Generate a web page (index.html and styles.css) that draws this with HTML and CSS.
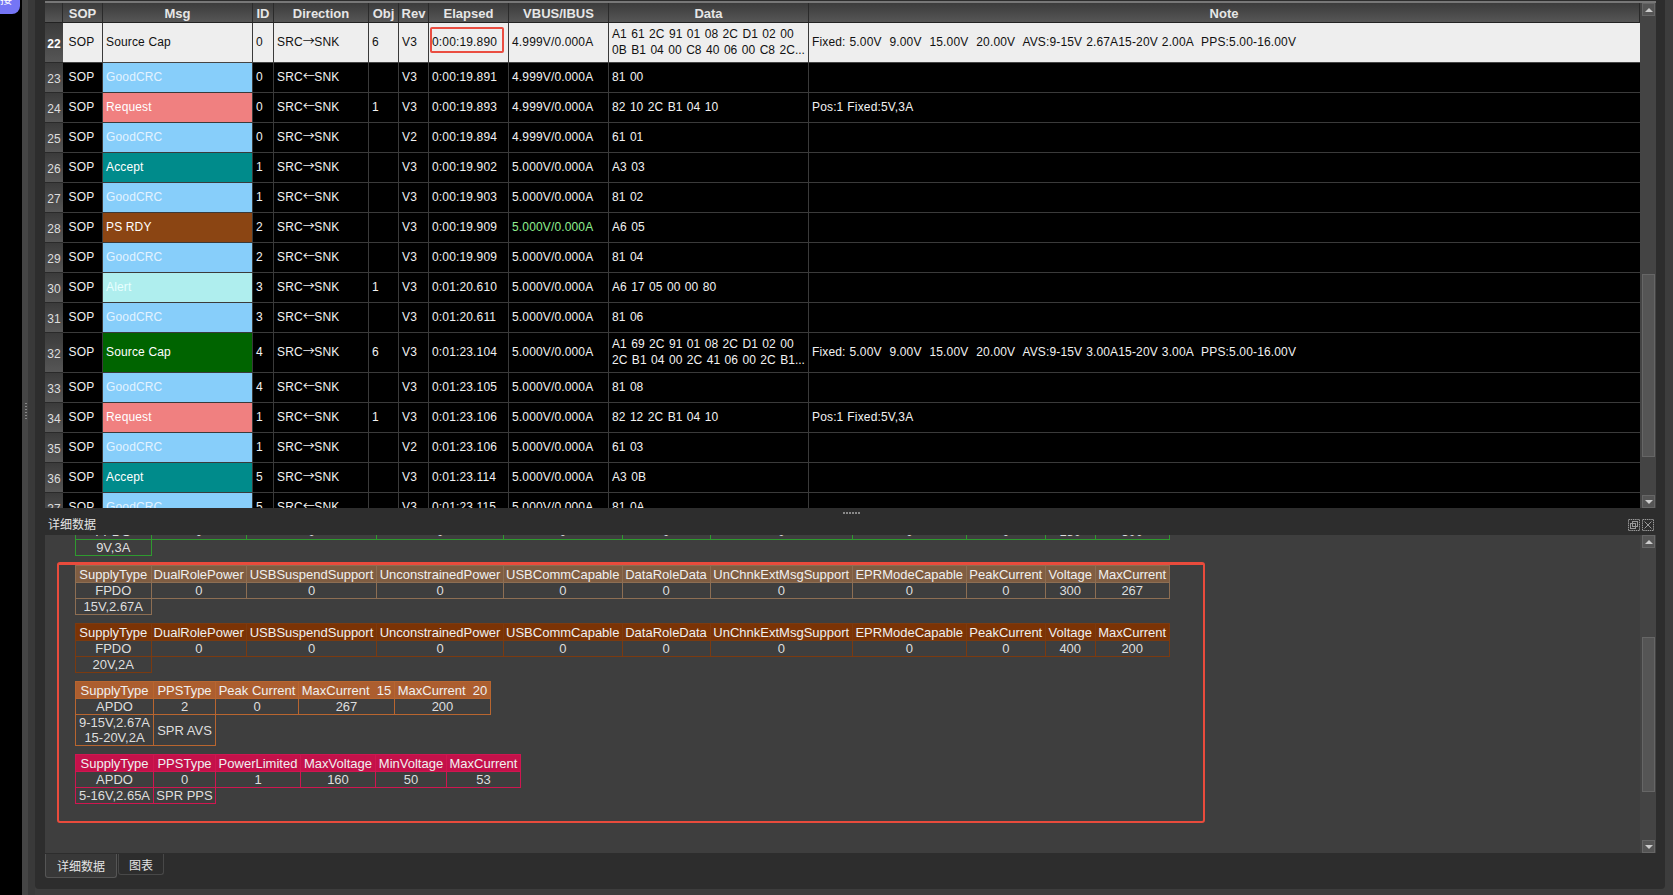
FILE: index.html
```html
<!DOCTYPE html>
<html lang="zh">
<head>
  <meta charset="UTF-8">
  <title>PD Analyzer</title>
  <link rel="stylesheet" href="styles.css">
</head>
<body>

  <aside class="rail">
    <div class="pill"><span>接</span></div>
  </aside>

  <div class="gutter">
    <div class="grip-v"></div>
  </div>

  <main class="panel">
    <div class="topline"></div>

    <section class="log">
      <div class="log-view">
        <table class="log-table">
          <thead>
            <tr>
              <th class="c-num"></th>
              <th class="c-sop">SOP</th>
              <th class="c-msg">Msg</th>
              <th class="c-id">ID</th>
              <th class="c-dir">Direction</th>
              <th class="c-obj">Obj</th>
              <th class="c-rev">Rev</th>
              <th class="c-time">Elapsed</th>
              <th class="c-vbus">VBUS/IBUS</th>
              <th class="c-data">Data</th>
              <th class="c-note">Note</th>
            </tr>
          </thead>
          <tbody>
            <tr class="tall selected">
              <th>22</th><td class="sop">SOP</td><td>Source Cap</td><td>0</td><td>SRC<span class="arrow">→</span>SNK</td><td>6</td><td>V3</td>
              <td class="marked">0:00:19.890<span class="mark"></span></td>
              <td>4.999V/0.000A</td>
              <td class="bytes">A1 61 2C 91 01 08 2C D1 02 00<br>0B B1 04 00 C8 40 06 00 C8 2C...</td>
              <td class="note">Fixed: 5.00V  9.00V  15.00V  20.00V  AVS:9-15V 2.67A15-20V 2.00A  PPS:5.00-16.00V</td>
            </tr>
            <tr>
              <th>23</th><td class="sop">SOP</td><td class="good">GoodCRC</td><td>0</td><td>SRC<span class="arrow">←</span>SNK</td><td></td><td>V3</td><td>0:00:19.891</td><td>4.999V/0.000A</td><td class="bytes">81 00</td><td></td>
            </tr>
            <tr>
              <th>24</th><td class="sop">SOP</td><td class="request">Request</td><td>0</td><td>SRC<span class="arrow">←</span>SNK</td><td>1</td><td>V3</td><td>0:00:19.893</td><td>4.999V/0.000A</td><td class="bytes">82 10 2C B1 04 10</td><td class="note">Pos:1 Fixed:5V,3A</td>
            </tr>
            <tr>
              <th>25</th><td class="sop">SOP</td><td class="good">GoodCRC</td><td>0</td><td>SRC<span class="arrow">→</span>SNK</td><td></td><td>V2</td><td>0:00:19.894</td><td>4.999V/0.000A</td><td class="bytes">61 01</td><td></td>
            </tr>
            <tr>
              <th>26</th><td class="sop">SOP</td><td class="accept">Accept</td><td>1</td><td>SRC<span class="arrow">→</span>SNK</td><td></td><td>V3</td><td>0:00:19.902</td><td>5.000V/0.000A</td><td class="bytes">A3 03</td><td></td>
            </tr>
            <tr>
              <th>27</th><td class="sop">SOP</td><td class="good">GoodCRC</td><td>1</td><td>SRC<span class="arrow">←</span>SNK</td><td></td><td>V3</td><td>0:00:19.903</td><td>5.000V/0.000A</td><td class="bytes">81 02</td><td></td>
            </tr>
            <tr>
              <th>28</th><td class="sop">SOP</td><td class="psrdy">PS RDY</td><td>2</td><td>SRC<span class="arrow">→</span>SNK</td><td></td><td>V3</td><td>0:00:19.909</td><td class="ok">5.000V/0.000A</td><td class="bytes">A6 05</td><td></td>
            </tr>
            <tr>
              <th>29</th><td class="sop">SOP</td><td class="good">GoodCRC</td><td>2</td><td>SRC<span class="arrow">←</span>SNK</td><td></td><td>V3</td><td>0:00:19.909</td><td>5.000V/0.000A</td><td class="bytes">81 04</td><td></td>
            </tr>
            <tr>
              <th>30</th><td class="sop">SOP</td><td class="alert">Alert</td><td>3</td><td>SRC<span class="arrow">→</span>SNK</td><td>1</td><td>V3</td><td>0:01:20.610</td><td>5.000V/0.000A</td><td class="bytes">A6 17 05 00 00 80</td><td></td>
            </tr>
            <tr>
              <th>31</th><td class="sop">SOP</td><td class="good">GoodCRC</td><td>3</td><td>SRC<span class="arrow">←</span>SNK</td><td></td><td>V3</td><td>0:01:20.611</td><td>5.000V/0.000A</td><td class="bytes">81 06</td><td></td>
            </tr>
            <tr class="tall">
              <th>32</th><td class="sop">SOP</td><td class="source">Source Cap</td><td>4</td><td>SRC<span class="arrow">→</span>SNK</td><td>6</td><td>V3</td><td>0:01:23.104</td><td>5.000V/0.000A</td>
              <td class="bytes">A1 69 2C 91 01 08 2C D1 02 00<br>2C B1 04 00 2C 41 06 00 2C B1...</td>
              <td class="note">Fixed: 5.00V  9.00V  15.00V  20.00V  AVS:9-15V 3.00A15-20V 3.00A  PPS:5.00-16.00V</td>
            </tr>
            <tr>
              <th>33</th><td class="sop">SOP</td><td class="good">GoodCRC</td><td>4</td><td>SRC<span class="arrow">←</span>SNK</td><td></td><td>V3</td><td>0:01:23.105</td><td>5.000V/0.000A</td><td class="bytes">81 08</td><td></td>
            </tr>
            <tr>
              <th>34</th><td class="sop">SOP</td><td class="request">Request</td><td>1</td><td>SRC<span class="arrow">←</span>SNK</td><td>1</td><td>V3</td><td>0:01:23.106</td><td>5.000V/0.000A</td><td class="bytes">82 12 2C B1 04 10</td><td class="note">Pos:1 Fixed:5V,3A</td>
            </tr>
            <tr>
              <th>35</th><td class="sop">SOP</td><td class="good">GoodCRC</td><td>1</td><td>SRC<span class="arrow">→</span>SNK</td><td></td><td>V2</td><td>0:01:23.106</td><td>5.000V/0.000A</td><td class="bytes">61 03</td><td></td>
            </tr>
            <tr>
              <th>36</th><td class="sop">SOP</td><td class="accept">Accept</td><td>5</td><td>SRC<span class="arrow">→</span>SNK</td><td></td><td>V3</td><td>0:01:23.114</td><td>5.000V/0.000A</td><td class="bytes">A3 0B</td><td></td>
            </tr>
            <tr>
              <th>37</th><td class="sop">SOP</td><td class="good">GoodCRC</td><td>5</td><td>SRC<span class="arrow">←</span>SNK</td><td></td><td>V3</td><td>0:01:23.115</td><td>5.000V/0.000A</td><td class="bytes">81 0A</td><td></td>
            </tr>
          </tbody>
        </table>
      </div>
      <div class="scrollbar">
        <div class="sb-btn up"></div>
        <div class="sb-track log-track"><div class="sb-thumb"></div></div>
        <div class="sb-btn down"></div>
      </div>
    </section>

    <div class="splitter"><div class="grip-h"></div></div>

    <div class="titlebar">
      <span class="title">详细数据</span>
      <div class="title-icons">
        <svg width="12" height="12" viewBox="0 0 12 12" fill="none" stroke="#999">
          <rect x=".5" y=".5" width="11" height="11" stroke-dasharray="1.5 .7"/>
          <rect x="4.5" y="2.5" width="5" height="5"/>
          <rect x="2.5" y="4.5" width="5" height="5"/>
        </svg>
        <svg width="12" height="12" viewBox="0 0 12 12" fill="none" stroke="#999">
          <rect x=".5" y=".5" width="11" height="11" stroke-dasharray="1.5 .7"/>
          <path d="M2.5 2.5l7 7M9.5 2.5l-7 7"/>
        </svg>
      </div>
    </div>

    <section class="detail">
      <div class="detail-view">
        <div class="detail-content">
          <table class="pdo green">
            <tr>
              <td class="w-type">FPDO</td><td class="w-a">0</td><td class="w-b">0</td><td class="w-c">0</td><td class="w-d">0</td><td class="w-e">0</td><td class="w-f">0</td><td class="w-g">0</td><td class="w-h">0</td><td class="w-i">180</td><td class="w-j">300</td>
            </tr>
            <tr><td>9V,3A</td></tr>
          </table>

          <div class="callout">
            <table class="pdo tan">
              <tr>
                <th class="w-type">SupplyType</th><th class="w-a">DualRolePower</th><th class="w-b">USBSuspendSupport</th><th class="w-c">UnconstrainedPower</th><th class="w-d">USBCommCapable</th><th class="w-e">DataRoleData</th><th class="w-f">UnChnkExtMsgSupport</th><th class="w-g">EPRModeCapable</th><th class="w-h">PeakCurrent</th><th class="w-i">Voltage</th><th class="w-j">MaxCurrent</th>
              </tr>
              <tr>
                <td>FPDO</td><td>0</td><td>0</td><td>0</td><td>0</td><td>0</td><td>0</td><td>0</td><td>0</td><td>300</td><td>267</td>
              </tr>
              <tr><td>15V,2.67A</td></tr>
            </table>

            <table class="pdo rust">
              <tr>
                <th class="w-type">SupplyType</th><th class="w-a">DualRolePower</th><th class="w-b">USBSuspendSupport</th><th class="w-c">UnconstrainedPower</th><th class="w-d">USBCommCapable</th><th class="w-e">DataRoleData</th><th class="w-f">UnChnkExtMsgSupport</th><th class="w-g">EPRModeCapable</th><th class="w-h">PeakCurrent</th><th class="w-i">Voltage</th><th class="w-j">MaxCurrent</th>
              </tr>
              <tr>
                <td>FPDO</td><td>0</td><td>0</td><td>0</td><td>0</td><td>0</td><td>0</td><td>0</td><td>0</td><td>400</td><td>200</td>
              </tr>
              <tr><td>20V,2A</td></tr>
            </table>

            <table class="pdo copper">
              <tr>
                <th class="w-apdo">SupplyType</th><th class="w-pps">PPSType</th><th class="w-peak">Peak Current</th><th class="w-m15">MaxCurrent&nbsp; 15</th><th class="w-m20">MaxCurrent&nbsp; 20</th>
              </tr>
              <tr>
                <td>APDO</td><td>2</td><td>0</td><td>267</td><td>200</td>
              </tr>
              <tr><td>9-15V,2.67A<br>15-20V,2A</td><td>SPR AVS</td></tr>
            </table>

            <table class="pdo pink">
              <tr>
                <th class="w-apdo">SupplyType</th><th class="w-pps">PPSType</th><th class="w-limit">PowerLimited</th><th class="w-maxv">MaxVoltage</th><th class="w-minv">MinVoltage</th><th class="w-maxc">MaxCurrent</th>
              </tr>
              <tr>
                <td>APDO</td><td>0</td><td>1</td><td>160</td><td>50</td><td>53</td>
              </tr>
              <tr><td>5-16V,2.65A</td><td>SPR PPS</td></tr>
            </table>
          </div>
        </div>
      </div>
      <div class="scrollbar">
        <div class="sb-btn up"></div>
        <div class="sb-track detail-track"><div class="sb-thumb"></div></div>
        <div class="sb-btn down"></div>
      </div>
    </section>

    <nav class="tabs">
      <div class="tab active">详细数据</div>
      <div class="tab">图表</div>
    </nav>
  </main>

</body>
</html>
```

FILE: styles.css
```css
* {
  box-sizing: border-box;
  margin: 0;
  padding: 0;
}

html, body {
  height: 100%;
}

body {
  display: flex;
  height: 895px;
  overflow: hidden;
  background-color: #3d3d3d;
  color: #eee;
  font-family: "Liberation Sans", "Noto Sans CJK SC", sans-serif;
  font-size: 12px;
}

/* Left edge */
.rail {
  width: 22px;
  background-color: #000;
  flex: none;
}

.pill {
  width: 20px;
  height: 14px;
  background-color: #7575f5;
  border-radius: 0 0 8px 0;
  overflow: hidden;
  color: #fff;
  font-size: 12px;
  line-height: 12px;
}

.pill span {
  display: block;
  margin-top: -6px;
}

.gutter {
  width: 13px;
  flex: none;
  background: linear-gradient(to right, #454545 0, #454545 6px, #393939 6px);
}

.grip-v {
  width: 2px;
  height: 17px;
  margin: 403px 0 0 3px;
  background: repeating-linear-gradient(to bottom, #888 0, #888 1px, transparent 1px, transparent 3px);
}

/* Main panel */
.panel {
  width: 1630px;
  height: 889px;
  flex: none;
  display: flex;
  flex-direction: column;
  background-color: #2d2d2d;
  border-radius: 0 0 4px 4px;
  padding: 1px 9px 0 10px;
}

.topline {
  height: 2px;
  background-color: #777;
  flex: none;
}

.log {
  height: 505px;
  flex: none;
  display: flex;
}

.log-view {
  width: 1595px;
  overflow: hidden;
  background-color: #000;
}

.log-table {
  width: 1595px;
  table-layout: fixed;
  border-collapse: separate;
  border-spacing: 0;
}

.log-table thead th {
  height: 20px;
  padding-top: 2px;
  font-size: 13px;
  font-weight: bold;
  color: #e6e6e6;
  text-align: center;
  background: linear-gradient(to bottom, #3b3b3b, #565656);
  border-right: 1px solid #2a2a2a;
  border-bottom: 1px solid #222;
}

.c-num { width: 18px; }
.c-sop { width: 40px; }
.c-msg { width: 150px; }
.c-id { width: 21px; }
.c-dir { width: 95px; }
.c-obj { width: 30px; }
.c-rev { width: 30px; }
.c-time { width: 80px; }
.c-vbus { width: 100px; }
.c-data { width: 200px; }
.c-note { width: 831px; }

.log-table tbody th {
  height: 30px;
  padding-top: 2px;
  font-size: 12px;
  font-weight: normal;
  color: #ddd;
  text-align: center;
  background: linear-gradient(to bottom, #3b3b3b, #565656);
  border-bottom: 1px solid #2a2a2a;
}

.log-table td {
  height: 30px;
  padding: 0 0 2px 3px;
  color: #f2f2f2;
  letter-spacing: .15px;
  white-space: nowrap;
  overflow: hidden;
  border-right: 1px solid #3a3a3a;
  border-bottom: 1px solid #3a3a3a;
}

.log-table td:last-child {
  border-right: 0;
}

.log-table td.sop {
  text-align: center;
  padding: 0 2px 2px 0;
}

.log-table tr.tall td,
.log-table tr.tall th {
  height: 40px;
}

.log-table tr.selected td {
  background-color: #eee;
  color: #111;
  border-bottom-color: #444;
}

.log-table tr.selected th {
  font-weight: bold;
  color: #fff;
}

.log-table td.good { background-color: #87cefa; color: #e3f3ff; }
.log-table td.request { background-color: #f08080; color: #fff; }
.log-table td.accept { background-color: #008b8b; color: #fff; }
.log-table td.psrdy { background-color: #8b4513; color: #fff; }
.log-table td.alert { background-color: #afeeee; color: #e8ffff; }
.log-table td.source { background-color: #006400; color: #fff; }
.log-table td.ok { color: #90ee90; }

.arrow {
  font-family: "Noto Sans CJK SC", sans-serif;
  line-height: 1;
  letter-spacing: -.5px;
}

.log-table td.bytes {
  letter-spacing: 0;
  word-spacing: 1.2px;
  line-height: 16px;
}

.log-table td.note {
  white-space: pre;
  word-spacing: .45px;
}

.marked {
  position: relative;
}

.mark {
  position: absolute;
  left: 1px;
  top: 4px;
  width: 74px;
  height: 26px;
  border: 2px solid #ea4d41;
  border-radius: 2px;
}

/* Scrollbars */
.scrollbar {
  width: 16px;
  flex: none;
  display: flex;
  flex-direction: column;
  background-color: #444;
  padding: 0 1px 0 2px;
}

.sb-btn {
  height: 13px;
  flex: none;
  display: flex;
  align-items: center;
  justify-content: center;
  background-color: #555;
  border: 1px solid #666;
}

.sb-btn.up::before,
.sb-btn.down::before {
  content: "";
  border-left: 4px solid transparent;
  border-right: 4px solid transparent;
}

.sb-btn.up::before { border-bottom: 4px solid #ccc; }
.sb-btn.down::before { border-top: 4px solid #ccc; }

.sb-track {
  flex: 1;
}

.log-track {
  padding-top: 258px;
}

.detail-track {
  padding-top: 89px;
}

.sb-thumb {
  height: 155px;
  background-color: #555;
  border: 1px solid #666;
}

.log-track .sb-thumb {
  height: 183px;
}

/* Splitter and title */
.splitter {
  height: 8px;
  flex: none;
  padding-top: 4px;
}

.grip-h {
  width: 17px;
  height: 2px;
  margin-left: 798px;
  background: repeating-linear-gradient(to right, #888 0, #888 2px, transparent 2px, transparent 3px);
}

.titlebar {
  height: 19px;
  flex: none;
  display: flex;
  align-items: center;
  justify-content: space-between;
  padding: 0 2px 2px 3px;
}

.title {
  color: #e4e4e4;
  font-size: 12px;
  line-height: 14px;
}

.title-icons {
  display: flex;
  gap: 2px;
}

/* Detail area */
.detail {
  height: 318px;
  flex: none;
  display: flex;
}

.detail-view {
  width: 1595px;
  overflow: hidden;
  background-color: #3e3e3e;
}

.detail-content {
  margin-top: -12px;
}

.pdo {
  border-collapse: collapse;
  table-layout: fixed;
  color: #dedede;
  font-size: 13px;
  line-height: 15px;
}

.pdo th,
.pdo td {
  height: 16px;
  padding: 0;
  text-align: center;
  white-space: nowrap;
  border-width: 1px;
  border-style: solid;
}

.pdo th {
  height: 17px;
  font-weight: normal;
  color: #f0f0f0;
}

.w-type { width: 75.5px; }
.w-a { width: 95.5px; }
.w-b { width: 130px; }
.w-c { width: 127px; }
.w-d { width: 118.5px; }
.w-e { width: 88px; }
.w-f { width: 142.5px; }
.w-g { width: 113.5px; }
.w-h { width: 79.5px; }
.w-i { width: 49.5px; }
.w-j { width: 74.5px; }

.w-apdo { width: 78px; }
.w-pps { width: 62px; }
.w-peak { width: 83px; }
.w-m15 { width: 96px; }
.w-m20 { width: 96px; }
.w-limit { width: 85px; }
.w-maxv { width: 75px; }
.w-minv { width: 71px; }
.w-maxc { width: 74px; }

.green {
  margin-left: 30px;
  margin-bottom: 6px;
}

.green td { border-color: #2f9a2f; }

.tan th { background-color: #7f5d42; border-color: #8d6e53; }
.tan td { border-color: #8d6e53; }

.rust th { background-color: #7b3305; border-color: #7b3a10; }
.rust td { border-color: #7b3a10; }

.copper th { background-color: #ac5e2f; border-color: #b8652f; }
.copper td { border-color: #b8652f; }

.pink th { background-color: #c4114a; border-color: #cf1650; }
.pink td { border-color: #cf1650; }

.callout {
  width: 1148px;
  height: 261px;
  margin-left: 12px;
  padding: 0 0 0 16px;
  border-style: solid;
  border-color: #e94b3c;
  border-width: 3px 2px 2px 2px;
  border-radius: 3px;
}

.callout .pdo {
  margin-bottom: 8px;
}

/* Tabs */
.tabs {
  display: flex;
  align-items: flex-start;
  gap: 1px;
  padding-top: 1px;
}

.tab {
  height: 21px;
  padding: 0 10px;
  line-height: 24px;
  color: #e4e4e4;
  border: 1px solid #484848;
  border-top: 0;
  border-radius: 0 0 3px 3px;
}

.tab.active {
  height: 24px;
  padding: 0 11px;
  line-height: 26px;
  background-color: #383838;
  border-color: #555;
}
```
